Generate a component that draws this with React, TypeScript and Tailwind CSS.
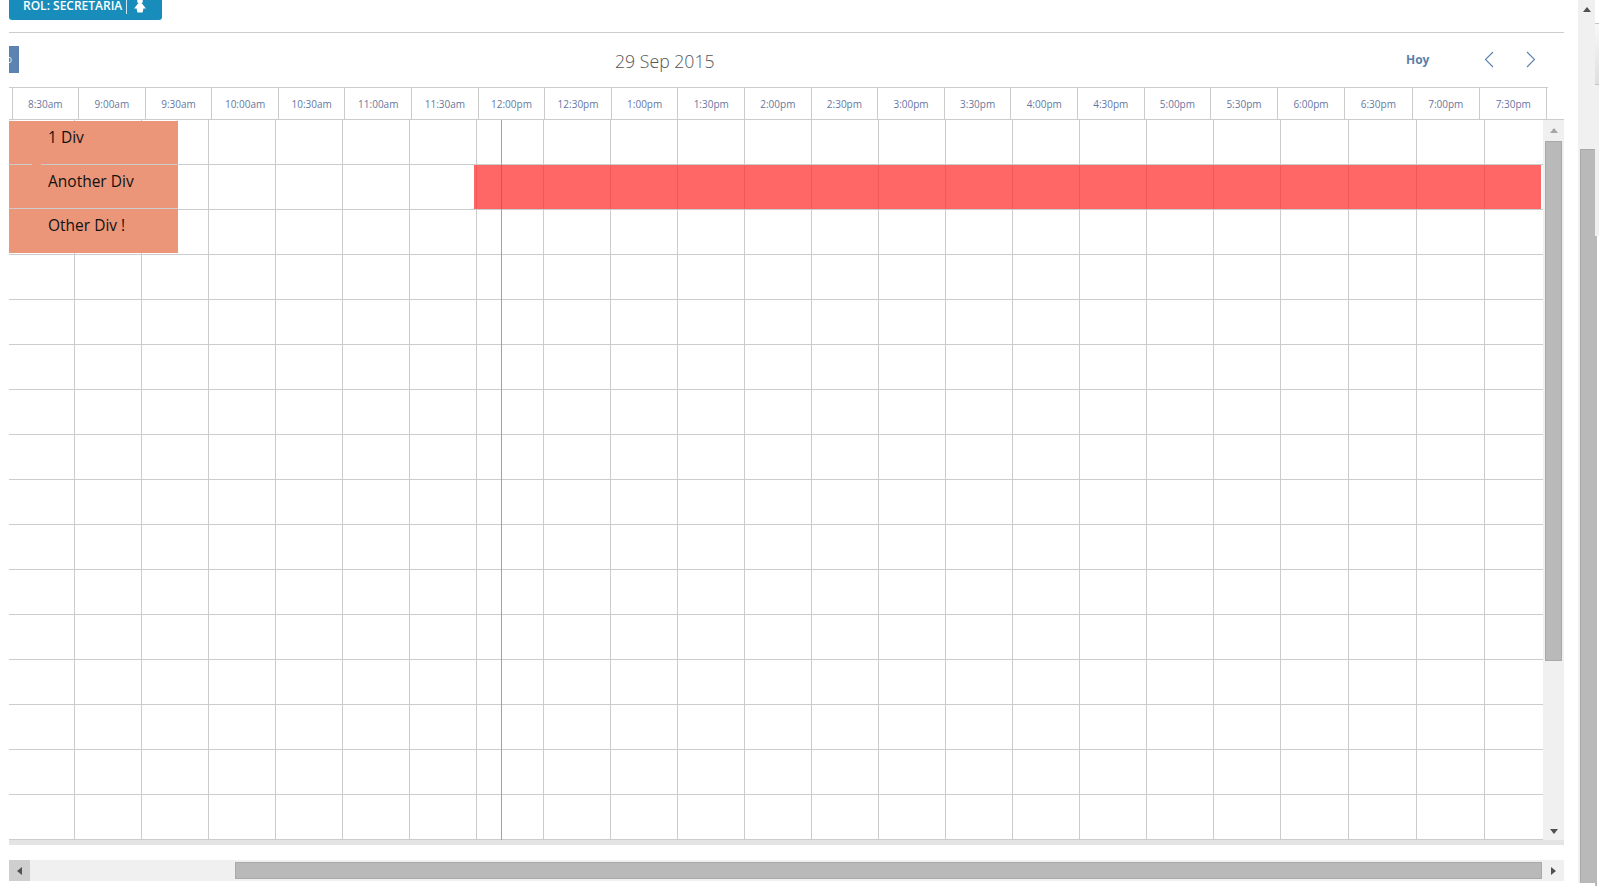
const hours = [
  "8:30am", "9:00am", "9:30am", "10:00am", "10:30am", "11:00am", "11:30am", "12:00pm",
  "12:30pm", "1:00pm", "1:30pm", "2:00pm", "2:30pm", "3:00pm", "3:30pm", "4:00pm",
  "4:30pm", "5:00pm", "5:30pm", "6:00pm", "6:30pm", "7:00pm", "7:30pm",
];
const rows = Array.from({ length: 16 }, (_, i) => i);

function Arrow({ dir, color }: { dir: "up" | "down" | "left" | "right"; color: string }) {
  const points = {
    up: "4,0 8,5 0,5",
    down: "0,0 8,0 4,5",
    left: "5,0 5,8 0,4",
    right: "0,0 0,8 5,4",
  }[dir];
  const vertical = dir === "up" || dir === "down";
  return (
    <svg width={vertical ? 8 : 5} height={vertical ? 5 : 8} viewBox={vertical ? "0 0 8 5" : "0 0 5 8"}>
      <polygon points={points} fill={color} />
    </svg>
  );
}

function RoleIcon() {
  return (
    <svg width="12" height="16" viewBox="0 0 12 16" fill="white">
      <circle cx="6" cy="3" r="2.8" />
      <path d="M4.2 5.2h3.6L11.9 10.6H9.4L8.6 14.4H3.4L2.6 10.6H0.1z" />
    </svg>
  );
}

function EventLabel({ text, last }: { text: string; last?: boolean }) {
  return (
    <div className={`h-[44px] pl-[39px] pt-[5px] text-[15.5px] leading-[22px] text-[#111111] ${last ? "" : "border-b border-[#cccccc]"}`}>
      {text}
    </div>
  );
}

export default function App() {
  return (
    <div className="flex h-[896px] w-[1608px] overflow-hidden bg-white font-['Open_Sans',sans-serif]">
      <div className="flex w-[1578px] shrink-0 flex-col pl-[9px] pr-[14px]">
        <button className="-mt-[9px] flex h-[29px] w-[153px] shrink-0 items-center gap-[4px] rounded-[3px] bg-[#188dbb] pl-[14px] text-[12px] font-semibold text-white">
          <span>ROL: SECRETARIA</span>
          <span className="h-[16px] w-px bg-[#cfe6f0]"></span>
          <span className="ml-[3px]"><RoleIcon /></span>
        </button>

        <div className="mt-[12px] h-px shrink-0 rounded-r bg-[#cccccc]"></div>

        <div className="flex h-[54px] shrink-0 items-center">
          <div className="mb-[1px] flex h-[27px] w-[10px] items-center overflow-hidden bg-[#5b82b0] text-[10px] text-[#e8eef5]">
            <span className="-ml-[3px]">o</span>
          </div>
          <div className="ml-[596px] mt-[3px] w-[100px] text-[17.7px] font-light leading-none text-[#555555]">29 Sep 2015</div>
          <div className="ml-[691px] text-[12px] font-bold text-[#5d7fa8]">Hoy</div>
          <svg className="mb-[1px] ml-[55px]" width="10" height="17" viewBox="0 0 10 17" fill="none" stroke="#5b82b0" strokeWidth="1.1">
            <path d="M9 1L1.5 8.5L9 16" />
          </svg>
          <svg className="mb-[1px] ml-[32px]" width="10" height="17" viewBox="0 0 10 17" fill="none" stroke="#5b82b0" strokeWidth="1.1">
            <path d="M1 1L8.5 8.5L1 16" />
          </svg>
        </div>

        <div className="h-[33px] shrink-0 border-b border-[#cccccc]">
          <div className="flex h-[32px] w-[1539px] border-t border-[#cccccc]">
            <div className="w-[3.5px] shrink-0 border-r border-[#cccccc]"></div>
            <div className="grid flex-1 grid-cols-[repeat(19,66.6px)_67.35px_repeat(3,67.45px)]">
              {hours.map((h) => (
                <div key={h} className="flex items-center justify-center border-r border-[#cccccc] pt-px text-[10px] text-[#66779f]">
                  {h}
                </div>
              ))}
            </div>
          </div>
        </div>

        <div className="flex h-[720px] shrink-0">
          <div className="relative w-[1534px] shrink-0">
            {rows.map((r) => (
              <div key={r} className="grid h-[45px] grid-cols-[66px_repeat(18,67px)_repeat(3,68px)_1fr] border-b border-[#cccccc]">
                {hours.map((h, i) => (
                  <div key={h} className={i < 22 ? "border-r border-[#cccccc]" : ""}></div>
                ))}
              </div>
            ))}

            <div className="absolute bottom-0 left-[492px] top-0 w-px bg-[#f97c82]"></div>
            <div className="absolute left-[465px] top-[45px] h-[44px] w-[1067px] bg-[#ff2d2d]/73"></div>

            <div className="absolute left-0 top-px w-[169px] bg-[#eb9679]">
              <EventLabel text="1 Div" />
              <EventLabel text="Another Div" />
              <EventLabel text="Other Div !" last />
              <div className="absolute left-[23px] top-[43px] h-px w-[9px] bg-[#eb9679]"></div>
            </div>
          </div>

          <div className="flex w-[21px] shrink-0 flex-col items-center bg-[#f0f0f0]">
            <div className="flex h-[21px] shrink-0 items-center justify-center">
              <Arrow dir="up" color="#a6a6a6" />
            </div>
            <div className="h-[520px] w-[17px] shrink-0 border border-[#a9a9a9] bg-[#b9b9b9]"></div>
            <div className="flex flex-1 items-end pb-[6px]">
              <Arrow dir="down" color="#505050" />
            </div>
          </div>
        </div>

        <div className="h-[5px] shrink-0 bg-[#e4e4e4]"></div>

        <div className="mt-[15px] flex h-[21px] shrink-0 items-center bg-[#f0f0f0]">
          <div className="flex h-[21px] w-[21px] shrink-0 items-center justify-center bg-[#cfcfcf]">
            <Arrow dir="left" color="#505050" />
          </div>
          <div className="ml-[205px] h-[17px] w-[1307px] shrink-0 border border-[#a9a9a9] bg-[#b9b9b9]"></div>
          <div className="flex flex-1 items-center justify-center">
            <Arrow dir="right" color="#505050" />
          </div>
        </div>
      </div>

      <div className="flex h-[883px] w-[17px] shrink-0 flex-col bg-[#f0f0f0]">
        <div className="flex h-[19px] shrink-0 items-center justify-center">
          <Arrow dir="up" color="#505050" />
        </div>
        <div className="h-[130px] shrink-0"></div>
        <div className="ml-[2px] flex-1 border-l border-t border-[#a9a9a9] bg-[#b9b9b9]"></div>
      </div>

      <div className="flex h-[886px] w-[4px] shrink-0 flex-col">
        <div className="h-[23px] shrink-0"></div>
        <div className="h-[62px] shrink-0 border-y border-[#c4c4c4] bg-gradient-to-b from-[#f8f8f8] to-[#dfdfdf]"></div>
        <div className="h-[151px] shrink-0 bg-[#f0f0f0]"></div>
        <div className="w-[2px] flex-1 bg-[#b9b9b9]"></div>
      </div>
    </div>
  );
}
